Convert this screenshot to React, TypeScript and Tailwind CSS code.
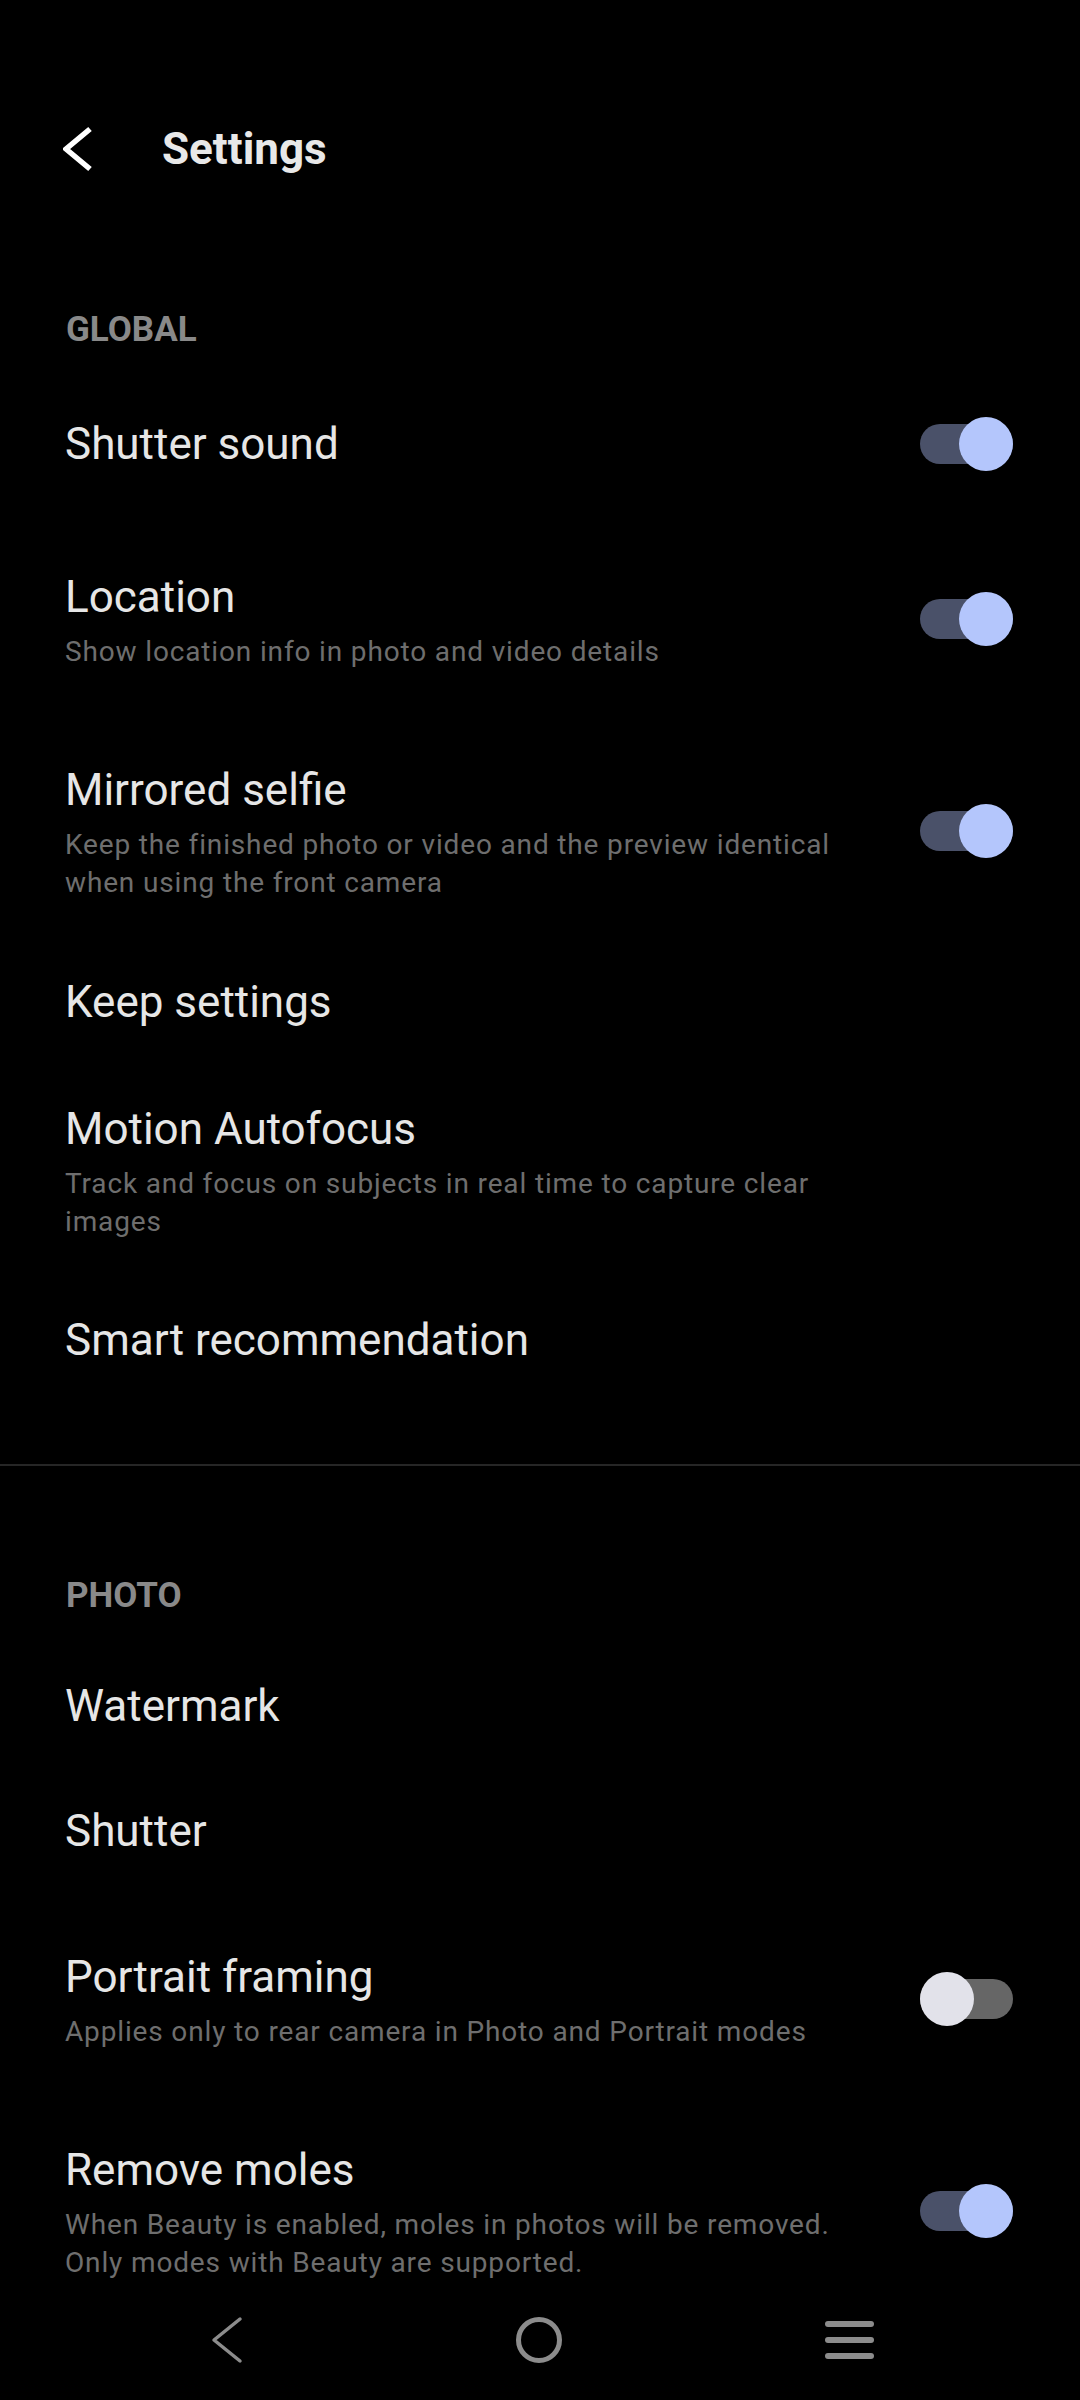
import React from 'react';

type RowProps = {
  title: string;
  desc?: string[];
  toggle?: 'on' | 'off';
  className?: string;
};

function Toggle({ on, raised }: { on: boolean; raised: boolean }) {
  return (
    <div
      className={`relative h-[40px] w-[93px] shrink-0 rounded-full ${on ? 'bg-[#4a5169]' : 'bg-[#666666]'} ${
        raised ? 'mb-[6px]' : ''
      }`}
    >
      <div
        className={`absolute top-[-7px] h-[54px] w-[54px] rounded-full ${
          on ? 'right-0 bg-[#b4c6fc]' : 'left-0 bg-[#e2e2ea]'
        }`}
      />
    </div>
  );
}

function Row({ title, desc, toggle, className = '' }: RowProps) {
  return (
    <div className={`flex items-center justify-between pl-[65px] pr-[67px] ${className}`}>
      <div className="max-w-[810px]">
        <div className="text-[44px] leading-[50px] text-[#e6e6e6]">{title}</div>
        {desc && (
          <div className="mt-[11px] text-[28px] leading-[38px] tracking-[0.85px] text-[#6e6e6e]">
            {desc.map((d) => (
              <div key={d}>{d}</div>
            ))}
          </div>
        )}
      </div>
      {toggle && <Toggle on={toggle === 'on'} raised={!!desc} />}
    </div>
  );
}

function SectionLabel({ label, className = '' }: { label: string; className?: string }) {
  return (
    <div className={`pl-[66px] text-[35px] font-bold leading-[42px] text-[#898989] ${className}`}>
      {label}
    </div>
  );
}

export default function App() {
  return (
    <div className="min-h-[2400px] w-full bg-black pt-[121px] font-['Roboto',sans-serif]">
      {/* Top bar */}
      <div className="flex h-[56px] items-center">
        <div className="ml-[63px] flex h-[46px] w-[30px] items-center">
          <svg width="30" height="46" viewBox="0 0 30 46" fill="none">
            <polyline points="27,3 3,23 27,43" stroke="#ffffff" strokeWidth="5.5" strokeLinecap="butt" strokeLinejoin="miter" />
          </svg>
        </div>
        <div className="ml-[69px] text-[44px] font-bold text-[#e8e8e8]">Settings</div>
      </div>

      <SectionLabel label="GLOBAL" className="mt-[132px]" />
      <Row title="Shutter sound" toggle="on" className="mt-[68px]" />
      <Row
        title="Location"
        desc={['Show location info in photo and video details']}
        toggle="on"
        className="mt-[103px]"
      />
      <Row
        title="Mirrored selfie"
        desc={['Keep the finished photo or video and the preview identical', 'when using the front camera']}
        toggle="on"
        className="mt-[94px]"
      />
      <Row title="Keep settings" className="mt-[75px]" />
      <Row
        title="Motion Autofocus"
        desc={['Track and focus on subjects in real time to capture clear', 'images']}
        className="mt-[77px]"
      />
      <Row title="Smart recommendation" className="mt-[74px]" />

      <div className="mt-[99px] h-[2px] w-full bg-[#262626]" />

      <SectionLabel label="PHOTO" className="mt-[109px]" />
      <Row title="Watermark" className="mt-[64px]" />
      <Row title="Shutter" className="mt-[75px]" />
      <Row
        title="Portrait framing"
        desc={['Applies only to rear camera in Photo and Portrait modes']}
        toggle="off"
        className="mt-[96px]"
      />
      <Row
        title="Remove moles"
        desc={['When Beauty is enabled, moles in photos will be removed.', 'Only modes with Beauty are supported.']}
        toggle="on"
        className="mt-[94px]"
      />

      {/* Navigation bar */}
      <div className="mt-[16px] flex h-[84px] items-center justify-between pl-[197px] pr-[200px]">
        <div className="flex h-[60px] w-[60px] items-center justify-center">
          <svg width="60" height="60" viewBox="0 0 60 60" fill="none">
            <polyline points="43,9 17,30 43,51" stroke="#8c8c8c" strokeWidth="3.5" strokeLinecap="round" strokeLinejoin="round" />
          </svg>
        </div>
        <div className="flex h-[60px] w-[60px] items-center justify-center">
          <svg width="60" height="60" viewBox="0 0 60 60" fill="none">
            <circle cx="30" cy="30" r="20.5" stroke="#8c8c8c" strokeWidth="5" />
          </svg>
        </div>
        <div className="flex h-[60px] w-[60px] items-center justify-center">
          <svg width="60" height="60" viewBox="0 0 60 60" fill="none">
            <rect x="5" y="11" width="49" height="6" rx="3" fill="#8c8c8c" />
            <rect x="5" y="27" width="49" height="6" rx="3" fill="#8c8c8c" />
            <rect x="5" y="43" width="49" height="6" rx="3" fill="#8c8c8c" />
          </svg>
        </div>
      </div>
    </div>
  );
}
